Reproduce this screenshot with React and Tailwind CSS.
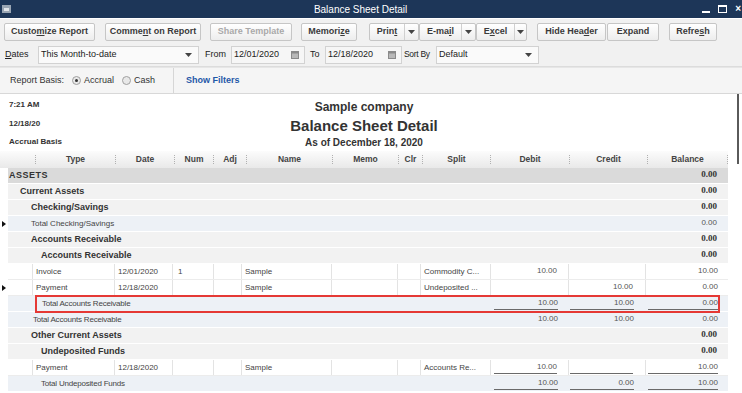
import React from "react";

const GRID =
  "grid grid-cols-[24px_83px_58px_41px_28px_90px_66px_23px_70px_78px_77px_82px]";
const HEADGRID =
  "grid grid-cols-[27px_80px_59px_39px_33px_86px_66px_24px_68px_79px_78px_81px]";

function Btn({ children, w, disabled, className = "" }) {
  return (
    <div
      className={`h-[18px] ${w} flex items-center justify-center border border-[#c6c6c6] rounded-[2px] bg-linear-to-b from-white to-[#ededed] text-[9px] font-bold ${
        disabled ? "text-[#a9a9a9]" : "text-[#3a3a3a]"
      } ${className}`}
    >
      {children}
    </div>
  );
}

function Arrow() {
  return (
    <svg width="7" height="4" viewBox="0 0 7 4">
      <path d="M0 0h7L3.5 4z" fill="#444" />
    </svg>
  );
}

function SplitBtn({ label, w, aw }) {
  return (
    <div className="h-[18px] flex border border-[#c6c6c6] rounded-[2px] bg-linear-to-b from-white to-[#ededed] text-[9px] font-bold text-[#3a3a3a]">
      <div className={`${w} flex items-center justify-center`}>{label}</div>
      <div className={`${aw} flex items-center justify-center border-l border-[#d0d0d0]`}>
        <Arrow />
      </div>
    </div>
  );
}

function Cal() {
  return (
    <svg width="8" height="8" viewBox="0 0 8 8">
      <rect x="0" y="0" width="8" height="8" fill="#8a8a8a" />
      <rect x="1" y="2.5" width="6" height="4.5" fill="#b8b8b8" />
    </svg>
  );
}

function Radio({ on }) {
  return (
    <div className="w-[9px] h-[9px] rounded-full border border-[#a0a0a0] bg-[#e8e8e8] flex items-center justify-center">
      {on && <div className="w-[3px] h-[3px] rounded-full bg-[#333]" />}
    </div>
  );
}

function Gutter({ mark }) {
  return (
    <div className="w-[8px] h-full flex items-center">
      {mark && (
        <svg width="4" height="6" viewBox="0 0 4 6" className="ml-[2px]">
          <path d="M0 0l4 3-4 3z" fill="#111" />
        </svg>
      )}
    </div>
  );
}

function Val({ v, bold, line, ml, mr }) {
  return (
    <div className="h-full flex items-end pb-[1px]">
      <div
        className={`w-full h-[14px] flex items-center justify-end ${ml} ${mr} ${
          line ? "border-b-[1.5px] border-[#6a6a6a]" : ""
        } ${
          bold
            ? "font-['Liberation_Serif',serif] font-bold text-[9px] text-[#333]"
            : "text-[8px] text-[#555]"
        }`}
      >
        {v}
      </div>
    </div>
  );
}

function Section({ label, pl, bg, bold = true, mark, bal = "0.00", balBold = true, tracking = "" }) {
  return (
    <div className="flex h-[16px]">
      <Gutter mark={mark} />
      <div className={`w-[720px] h-full flex items-center border-b border-white ${bg}`}>
        <div
          className={`flex-1 ${pl} ${tracking} ${
            bold ? "font-bold text-[9px] text-[#333]" : "text-[8px] text-[#444]"
          }`}
        >
          {label}
        </div>
        <div className="w-[82px] h-full">
          <Val v={bal} bold={balBold} ml="ml-[2px]" mr="mr-[11px]" />
        </div>
      </div>
    </div>
  );
}

function Total({ label, pl, vals, line, boxed, bg = "bg-[#edf1f6]" }) {
  return (
    <div className="flex h-[16px]">
      <Gutter />
      <div className={`${boxed ? "relative" : ""} w-[720px] h-full ${GRID} border-b border-white ${bg}`}>
        <div className={`col-span-9 flex items-center ${pl} text-[8px] text-[#444] tracking-[-0.2px]`}>
          {label}
        </div>
        <Val v={vals[0]} line={line} ml="ml-[3px]" mr="mr-[11px]" />
        <Val v={vals[1]} line={line} ml="ml-[1px]" mr="mr-[12px]" />
        <Val v={vals[2]} line={line} ml="ml-[2px]" mr="mr-[10px]" />
        {boxed && (
          <div className="absolute z-10 left-[27px] right-[8px] top-[-1px] bottom-[-2px] border-2 border-[#e53935]" />
        )}
      </div>
    </div>
  );
}

function Data({ mark, cells, vals, line }) {
  const c = "h-full flex items-center border-r border-[#e3e3e3] text-[8px] text-[#444] pl-[3px] truncate";
  return (
    <div className="flex h-[16px]">
      <Gutter mark={mark} />
      <div className={`w-[720px] h-full ${GRID} bg-white border-b border-[#ececec]`}>
        <div className="h-full" />
        <div className={`${c} border-l`}>{cells[0]}</div>
        <div className={c}>{cells[1]}</div>
        <div className={`${c} pl-[5px]`}>{cells[2]}</div>
        <div className={c} />
        <div className={c}>{cells[3]}</div>
        <div className={c} />
        <div className={c} />
        <div className={c}>{cells[4]}</div>
        <div className="border-r border-[#e3e3e3]">
          <Val v={vals[0]} line={line} ml="ml-[3px]" mr="mr-[11px]" />
        </div>
        <div className="border-r border-[#e3e3e3]">
          <Val v={vals[1]} line={line} ml="ml-[1px]" mr="mr-[12px]" />
        </div>
        <Val v={vals[2]} line={line} ml="ml-[2px]" mr="mr-[10px]" />
      </div>
    </div>
  );
}

function HeadCell({ label, last }) {
  return (
    <div className="h-full flex items-center">
      <span className="h-[9px] border-l border-dotted border-[#b0b0b0]" />
      <span className="flex-1 text-center">{label}</span>
      {last && <span className="h-[9px] border-l border-dotted border-[#b0b0b0]" />}
    </div>
  );
}

export default function App() {
  const heads = ["Type", "Date", "Num", "Adj", "Name", "Memo", "Clr", "Split", "Debit", "Credit", "Balance"];
  return (
    <div className="w-[742px] h-[393px] overflow-hidden bg-white font-['Liberation_Sans',Arial,sans-serif] flex flex-col">
      {/* title bar */}
      <div className="h-[18px] shrink-0 bg-[#1d3658] flex items-center text-white">
        <div className="ml-[2px] w-[9px] h-[8px] bg-[#9aa6b4] flex items-center justify-center">
          <div className="w-[5px] h-[3px] bg-[#e2e6ea] mt-[1px]" />
        </div>
        <div className="flex-1 text-center text-[10px] pl-[8px]">Balance Sheet Detail</div>
        <div className="flex items-center gap-[8px] mr-[1px]">
          <div className="w-[8px] h-[2px] bg-white mt-[6px]" />
          <div className="w-[9px] h-[8px] border border-white border-t-2" />
          <div className="text-[10px] font-bold leading-none">×</div>
        </div>
      </div>

      {/* toolbar */}
      <div className="h-[25px] shrink-0 bg-[#f1f1f1] border-t border-white flex items-center pl-[4px] pt-[1px]">
        <Btn w="w-[91px]">
          Custo<u>m</u>ize Report
        </Btn>
        <Btn w="w-[96px]" className="ml-[10px]">
          Comme<u>n</u>t on Report
        </Btn>
        <Btn w="w-[82px]" className="ml-[9px]" disabled>
          Share Template
        </Btn>
        <Btn w="w-[56px]" className="ml-[9px]">
          Memori<u>z</u>e
        </Btn>
        <div className="ml-[12px] flex">
          <SplitBtn label={<>Prin<u>t</u></>} w="w-[34px]" aw="w-[14px]" />
          <SplitBtn label={<>E-ma<u>i</u>l</>} w="w-[41px]" aw="w-[14px]" />
          <SplitBtn label={<>E<u>x</u>cel</>} w="w-[37px]" aw="w-[12px]" />
        </div>
        <Btn w="w-[69px]" className="ml-[10px]">
          Hide Hea<u>d</u>er
        </Btn>
        <Btn w="w-[52px]" className="ml-[1px]">
          Expand
        </Btn>
        <Btn w="w-[48px]" className="ml-[10px]">
          Refre<u>s</u>h
        </Btn>
      </div>

      {/* dates row */}
      <div className="h-[24px] shrink-0 bg-[#f1f1f1] border-b border-[#dcdcdc] flex items-center pl-[5px] text-[9px] text-[#222]">
        <div className="w-[33px]">
          <u>D</u>ates
        </div>
        <div className="w-[161px] h-[18px] bg-[#fafafa] border border-[#d2d2d2] flex items-center justify-between pl-[2px] pr-[6px]">
          <span>This Month-to-date</span>
          <Arrow />
        </div>
        <div className="ml-[6px] w-[26px]">From</div>
        <div className="w-[74px] h-[18px] bg-[#f6f6f6] border border-[#d2d2d2] flex items-center justify-between pl-[2px] pr-[5px]">
          <span>12/01/2020</span>
          <Cal />
        </div>
        <div className="ml-[5px] w-[15px]">To</div>
        <div className="w-[77px] h-[18px] bg-[#f6f6f6] border border-[#d2d2d2] flex items-center justify-between pl-[2px] pr-[5px]">
          <span>12/18/2020</span>
          <Cal />
        </div>
        <div className="ml-[2px] w-[32px] text-[8.5px] tracking-[-0.3px]">Sort By</div>
        <div className="w-[103px] h-[18px] bg-[#fafafa] border border-[#d2d2d2] flex items-center justify-between pl-[2px] pr-[6px]">
          <span>Default</span>
          <Arrow />
        </div>
      </div>

      {/* report basis */}
      <div className="h-[27px] shrink-0 bg-[#f5f5f5] border-t border-[#e6e6e6] border-b border-b-[#d8d8d8] flex text-[9px] text-[#333]">
        <div className="w-[174px] border-r border-[#d6d6d6] flex items-center pl-[10px]">
          <span>Report Basis:</span>
          <span className="ml-[8px]">
            <Radio on />
          </span>
          <span className="ml-[3px]">Accrual</span>
          <span className="ml-[8px]">
            <Radio />
          </span>
          <span className="ml-[3px]">Cash</span>
        </div>
        <div className="flex items-center pl-[12px] font-bold text-[#1f58a8]">Show Filters</div>
      </div>

      {/* report */}
      <div className="flex-1 flex min-h-0">
        <div className="w-[728px] flex flex-col">
          <div className="h-[57px] shrink-0 grid grid-cols-[1fr_auto_1fr] text-[#333] font-bold">
            <div className="pl-[9px] pt-[2px] text-[8px] leading-[18.5px]">
              <div>7:21 AM</div>
              <div>12/18/20</div>
              <div>Accrual Basis</div>
            </div>
            <div className="pt-[3px] text-center">
              <div className="h-[20px] leading-[20px] text-[12px]">Sample company</div>
              <div className="h-[18px] leading-[18px] text-[15px]">Balance Sheet Detail</div>
              <div className="h-[16px] leading-[16px] text-[10px]">As of December 18, 2020</div>
            </div>
            <div />
          </div>

          <div className="h-[17px] shrink-0 flex bg-linear-to-b from-[#fcfcfc] to-[#e9e9e9] text-[8.5px] font-bold text-[#444]">
            <div className="w-[8px]" />
            <div className={`w-[720px] h-full ${HEADGRID}`}>
              <div />
              {heads.map((h, i) => (
                <HeadCell key={h} label={h} last={i === heads.length - 1} />
              ))}
            </div>
          </div>

          <Section label="ASSETS" pl="pl-[1px]" bg="bg-[#dadada]" tracking="tracking-[0.5px] text-[8.5px]" />
          <Section label="Current Assets" pl="pl-[12px]" bg="bg-[#f2f2f2]" />
          <Section label="Checking/Savings" pl="pl-[23px]" bg="bg-[#f2f2f2]" />
          <Section
            label="Total Checking/Savings"
            pl="pl-[23px]"
            bg="bg-[#edf1f6]"
            bold={false}
            balBold={false}
            mark
          />
          <Section label="Accounts Receivable" pl="pl-[23px]" bg="bg-[#f2f2f2]" />
          <Section label="Accounts Receivable" pl="pl-[33px]" bg="bg-[#f2f2f2]" />
          <Data
            cells={["Invoice", "12/01/2020", "1", "Sample", "Commodity C..."]}
            vals={["10.00", "", "10.00"]}
          />
          <Data
            mark
            cells={["Payment", "12/18/2020", "", "Sample", "Undeposited ..."]}
            vals={["", "10.00", "0.00"]}
          />
          <Total label="Total Accounts Receivable" pl="pl-[34px]" vals={["10.00", "10.00", "0.00"]} line boxed />
          <Total label="Total Accounts Receivable" pl="pl-[25px]" vals={["10.00", "10.00", "0.00"]} />
          <Section label="Other Current Assets" pl="pl-[23px]" bg="bg-[#f2f2f2]" />
          <Section label="Undeposited Funds" pl="pl-[33px]" bg="bg-[#f2f2f2]" />
          <Data
            cells={["Payment", "12/18/2020", "", "Sample", "Accounts Re..."]}
            vals={["10.00", "", "10.00"]}
            line
          />
          <Total label="Total Undeposited Funds" pl="pl-[33px]" vals={["10.00", "0.00", "10.00"]} line />
        </div>
        <div className="w-[14px] flex justify-end">
          <div className="w-[2px] h-[70px] bg-[#5a5a5a] mr-[3px]" />
        </div>
      </div>
    </div>
  );
}
